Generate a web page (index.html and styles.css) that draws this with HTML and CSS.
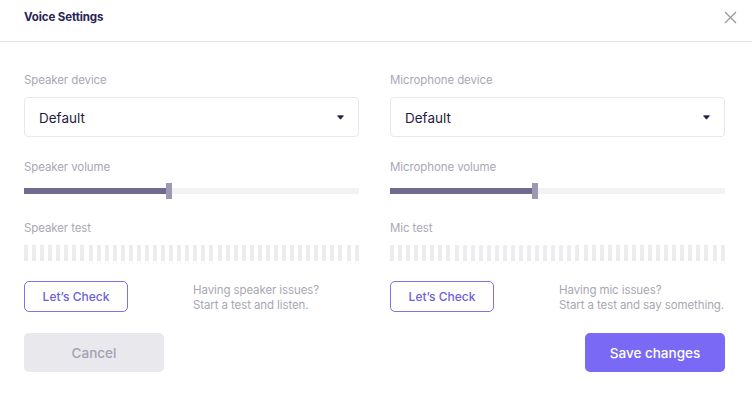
FILE: index.html
```html
<!DOCTYPE html>
<html>
<head>
<meta charset="utf-8">
<link rel="stylesheet" href="styles.css">
</head>
<body>
<div class="modal">
  <div class="header">
    <div class="title">Voice Settings</div>
    <svg class="close" width="13" height="13" viewBox="0 0 13 13"><path d="M1 1L12 12M12 1L1 12" stroke="#9b9b9b" stroke-width="1.3" fill="none"/></svg>
  </div>
  <div class="body">
    <div class="col">
      <div class="label">Speaker device</div>
      <div class="select"><span>Default</span><svg width="7" height="5" viewBox="0 0 7 5"><path d="M0.6 0.8H6.4L3.5 4.2Z" fill="#1f1b45" stroke="#1f1b45" stroke-width="0.8" stroke-linejoin="round"/></svg></div>
      <div class="label vol">Speaker volume</div>
      <div class="slider"><div class="fill"></div><div class="thumb"></div><div class="rest"></div></div>
      <div class="label test">Speaker test</div>
      <div class="bars" id="bars1"></div>
      <div class="check-row">
        <button class="check">Let’s Check</button>
        <div class="hint">Having speaker issues?<br>Start a test and listen.</div>
      </div>
    </div>
    <div class="col">
      <div class="label">Microphone device</div>
      <div class="select"><span>Default</span><svg width="7" height="5" viewBox="0 0 7 5"><path d="M0.6 0.8H6.4L3.5 4.2Z" fill="#1f1b45" stroke="#1f1b45" stroke-width="0.8" stroke-linejoin="round"/></svg></div>
      <div class="label vol">Microphone volume</div>
      <div class="slider"><div class="fill"></div><div class="thumb"></div><div class="rest"></div></div>
      <div class="label test">Mic test</div>
      <div class="bars" id="bars2"></div>
      <div class="check-row">
        <button class="check">Let’s Check</button>
        <div class="hint">Having mic issues?<br>Start a test and say something.</div>
      </div>
    </div>
  </div>
  <div class="footer">
    <button class="cancel">Cancel</button>
    <button class="save">Save changes</button>
  </div>
</div>
<script>
for (const id of ['bars1','bars2']) {
  const el = document.getElementById(id);
  for (let i = 0; i < 42; i++) { const b = document.createElement('i'); el.appendChild(b); }
}
</script>
</body>
</html>
```

FILE: styles.css
```css
* { box-sizing: border-box; }
html, body { margin: 0; background: #fff; }
body { font-family: Inter, "Noto Sans", sans-serif; }
.modal { width: 752px; height: 395px; }
.header {
  height: 42px;
  padding: 9px 15px 0 24px;
  border-bottom: 1px solid #e6e6e9;
  display: flex;
  justify-content: space-between;
  align-items: flex-start;
}
.title { font-size: 11.5px; font-weight: 700; color: #272355; line-height: 16px; letter-spacing: -0.1px; }
.close { margin-top: 2px; }
.body {
  display: grid;
  grid-template-columns: 335px 335px;
  column-gap: 31px;
  padding: 30px 0 0 24px;
}
.col { display: flex; flex-direction: column; }
.label { font-size: 11.5px; line-height: 16px; color: #aaa7b7; letter-spacing: -0.1px; }
.select {
  margin-top: 9px;
  height: 40px;
  border: 1px solid #e8e7ee;
  border-radius: 4px;
  display: flex;
  align-items: center;
  justify-content: space-between;
  padding: 0 14px 0 14px;
  font-size: 13.5px;
  color: #1f1b45;
}
.select span { margin-top: 1px; }
.vol { margin-top: 22px; }
.slider { margin-top: 8px; height: 16px; display: flex; align-items: center; }
.fill { width: 142px; height: 6px; background: #6f6a8f; }
.thumb { width: 6px; height: 16px; background: #9d99b5; }
.rest { flex: 1; height: 6px; background: #f2f2f4; }
.test { margin-top: 21px; }
.bars { margin-top: 9px; height: 16px; display: flex; justify-content: space-between; }
.bars i { display: block; width: 4px; height: 16px; background: #ececee; }
.check-row { margin-top: 20px; display: flex; align-items: flex-start; }
.check {
  width: 104px; height: 31px;
  border: 1px solid #7f72e4;
  border-radius: 5px;
  background: #fff;
  color: #6c5fd8;
  font-family: inherit;
  font-size: 12px;
  font-weight: 500;
  padding: 0;
  flex: none;
}
.hint { margin-left: 65px; margin-top: 2px; font-size: 11.5px; line-height: 14.5px; color: #a9a7b4; letter-spacing: -0.1px; white-space: nowrap; }
.footer {
  display: flex;
  justify-content: space-between;
  padding: 21px 27px 0 24px;
}
.footer button {
  width: 140px; height: 39px;
  border: none;
  border-radius: 5px;
  font-family: inherit;
  font-size: 13.5px;
  font-weight: 500;
  padding: 0;
}
.cancel { background: #e8e8ed; color: #a4a2b2; }
.save { background: #7a69f4; color: #fff; }
```
